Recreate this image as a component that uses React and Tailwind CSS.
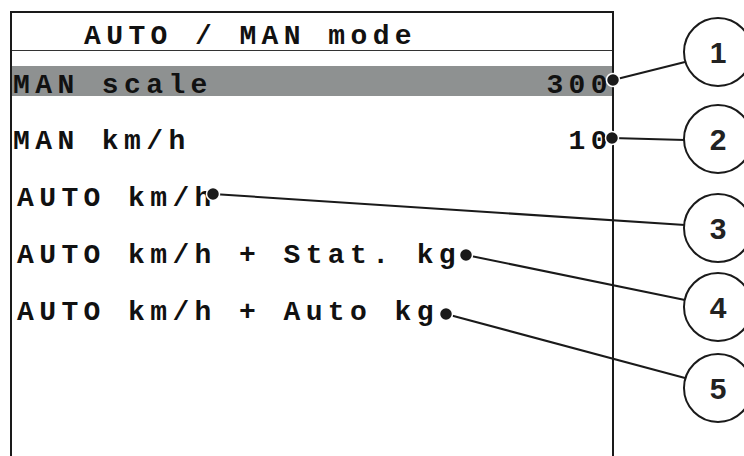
const lcd = { fontFamily: '"Liberation Mono", "DejaVu Sans Mono", monospace' };

const rows = [
  { label: 'MAN scale', value: '300', active: true, indent: false },
  { label: 'MAN km/h', value: '10', indent: false },
  { label: 'AUTO km/h', indent: true },
  { label: 'AUTO km/h + Stat. kg', indent: true },
  { label: 'AUTO km/h + Auto kg', indent: true },
];

// callout lines: dot on the screen -> circle on the right
const callouts = [
  { n: 1, dot: [613, 80], end: [685, 62], cy: 52 },
  { n: 2, dot: [612, 138], end: [685, 140], cy: 139 },
  { n: 3, dot: [213, 194], end: [685, 225], cy: 228 },
  { n: 4, dot: [466, 255], end: [685, 300], cy: 307 },
  { n: 5, dot: [446, 314], end: [685, 378], cy: 388 },
];

const Callouts = () => (
  <svg className="pointer-events-none absolute left-0 top-0" width="744" height="456" viewBox="0 0 744 456">
    {callouts.map((c) => (
      <g key={c.n}>
        <line x1={c.dot[0]} y1={c.dot[1]} x2={c.end[0]} y2={c.end[1]} stroke="#1a1a1a" strokeWidth="2" />
        <circle cx={c.dot[0]} cy={c.dot[1]} r="6.5" fill="#1a1a1a" stroke="#fff" strokeWidth="1.5" />
        <circle cx="718" cy={c.cy} r="34" fill="#fff" stroke="#1a1a1a" strokeWidth="2" />
        <text
          x="718"
          y={c.cy + 11}
          textAnchor="middle"
          fontFamily='"Liberation Sans", Arial, sans-serif'
          fontWeight="700"
          fontSize="30"
          fill="#222"
        >
          {c.n}
        </text>
      </g>
    ))}
  </svg>
);

export default function App() {
  return (
    <div className="relative h-[456px] w-[744px] overflow-hidden bg-white">
      <div className="ml-[10px] mt-[11px] flex h-[445px] w-[604px] flex-col border-x-2 border-t-2 border-[#1a1a1a]">
        <div
          className="flex h-[38px] items-center border-b-[1.5px] border-[#333] pl-[72px] pt-[11px] text-[28px] font-bold tracking-[5.4px] text-[#111]"
          style={lcd}
        >
          AUTO / MAN mode
        </div>
        <div className="mt-[15px] flex flex-col gap-[27px]">
          {rows.map((r) => (
            <div
              key={r.label}
              className={`flex h-[30px] items-center justify-between pr-[1px] pt-[7px] text-[28px] font-bold tracking-[5.4px] text-[#111] ${
                r.active ? 'bg-[#8e9191] pt-[9px]' : ''
              } ${r.indent ? 'pl-[5px]' : 'pl-[1px]'}`}
              style={lcd}
            >
              <span className="whitespace-pre">{r.label}</span>
              {r.value && <span className="-mr-[2px]">{r.value}</span>}
            </div>
          ))}
        </div>
      </div>
      <Callouts />
    </div>
  );
}
